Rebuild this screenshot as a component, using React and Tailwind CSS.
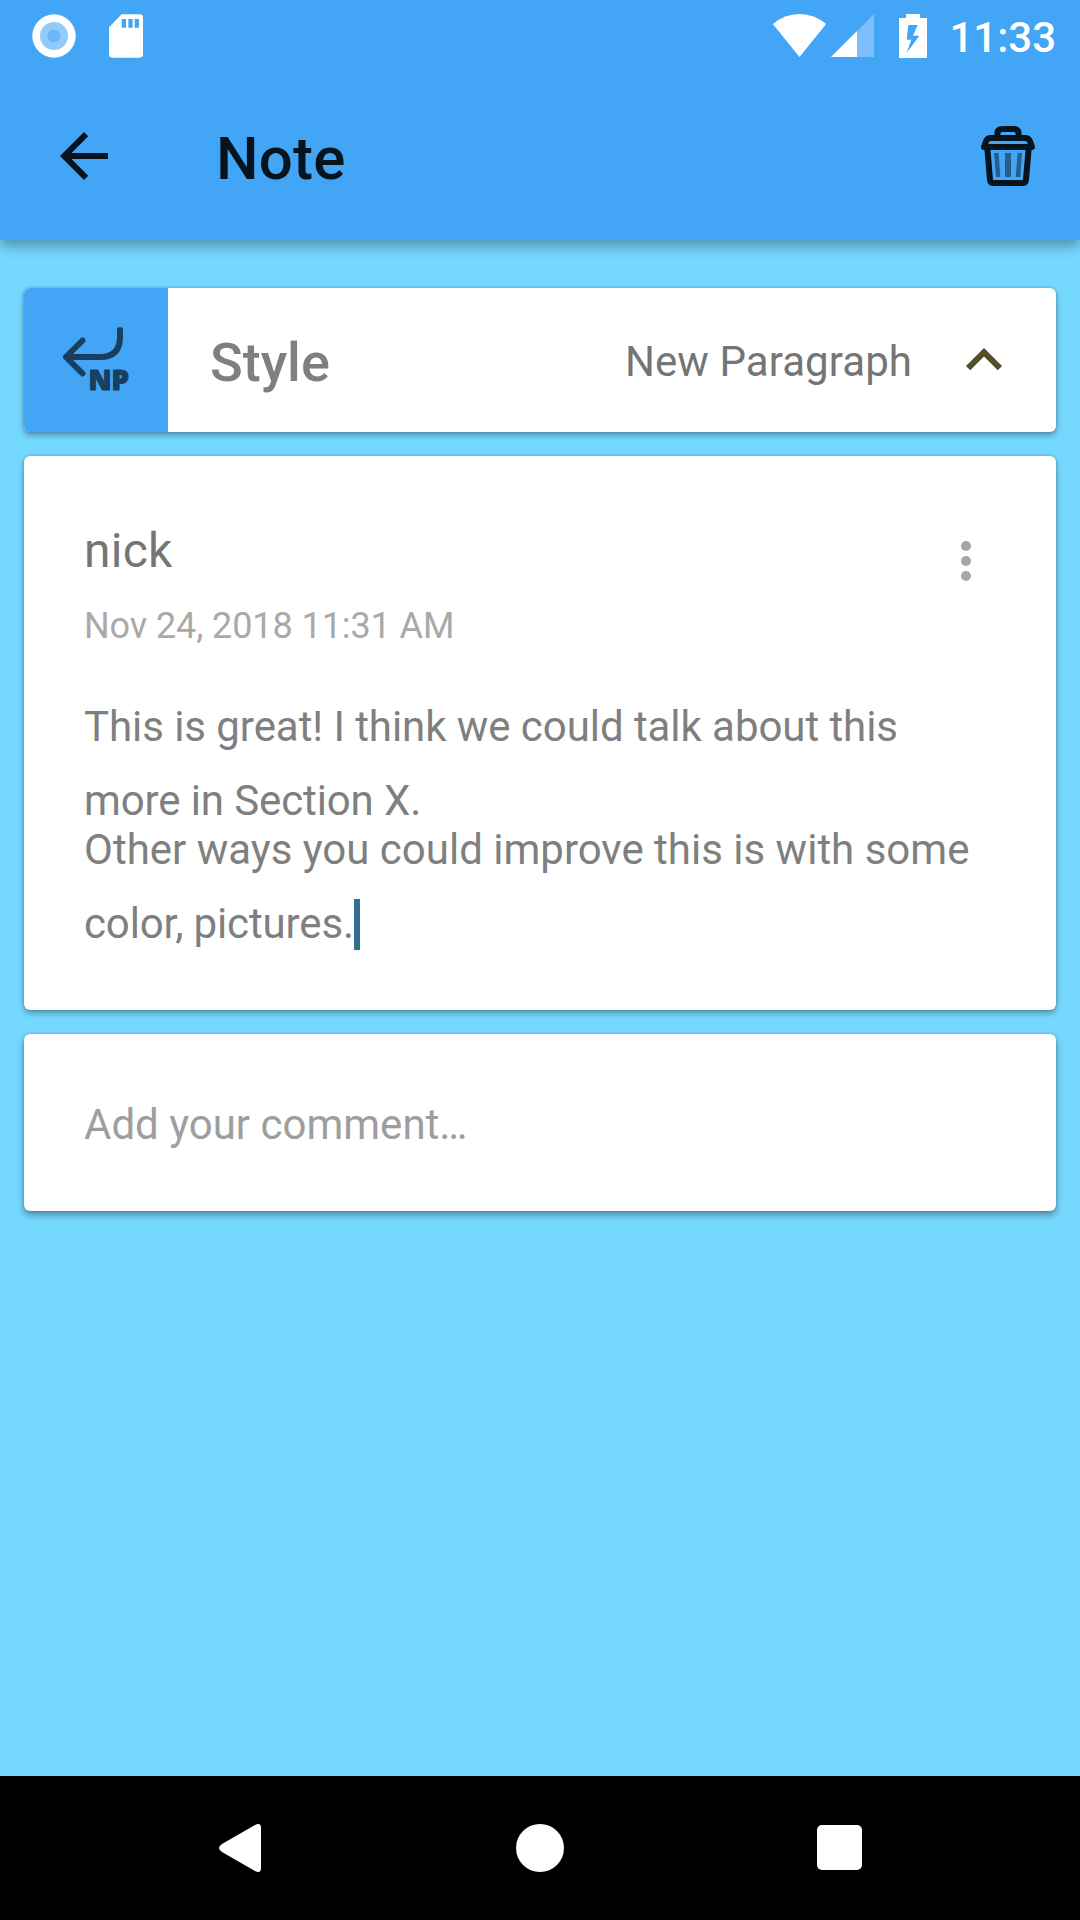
function StatusBar() {
  return (
    <div className="flex h-[72px] shrink-0 items-start justify-between pt-3 pr-6 pl-8 text-white">
      <div className="flex gap-8">
        <svg className="h-12 w-11" viewBox="0 0 44 48">
          <circle cx="22" cy="24" r="21.7" fill="#fff" />
          <circle cx="22" cy="24" r="14" fill="#92cbf9" />
          <circle cx="22" cy="24" r="6.6" fill="#6cb8f7" />
        </svg>
        <svg className="h-12 w-9" viewBox="324 36 108 144">
          <path
            d="M365 43H419Q429 43 429 53V163Q429 173 419 173H337Q327 173 327 163V82ZM365 57V83H378V57ZM385 57V83H398V57ZM404 57V83H417V57Z"
            fill="#fff"
            fillRule="evenodd"
          />
        </svg>
      </div>
      <div className="flex">
        <svg className="h-12 w-[55px]" viewBox="96 36 165 144">
          <path d="M98.500 72Q134 42 178.500 42T258.500 72L178.500 171Z" fill="#fff" />
        </svg>
        <svg className="ml-1 h-12 w-[44px]" viewBox="273 36 132 144">
          <path d="M351 94L402 42V171H351Z" fill="#7cbffb" />
          <path d="M273 171L351 93V171Z" fill="#fff" />
        </svg>
        <svg className="ml-[23px] h-12 w-[30px]" viewBox="474 36 90 144">
          <path
            d="M498 42H540V54H561V174H477V54H498ZM505 75L500 119H514L500 159L538 107H519L533 75Z"
            fill="#fff"
            fillRule="evenodd"
          />
        </svg>
        <span className="ml-[21px] pt-[5px] text-[42px] leading-[42px] font-medium">11:33</span>
      </div>
    </div>
  );
}

function TrashIcon() {
  return (
    <svg className="h-16 w-14" viewBox="720 372 168 192" fill="none">
      <path d="M762 459H776L781 531H768ZM795 459H813V531H795ZM833 459H846L841 531H827Z" fill="#265f8b" />
      <g stroke="#07141e" strokeWidth="18" strokeLinejoin="round">
        <path d="M772 408V402Q772 387 787 387H821Q836 387 836 402V408" />
        <path d="M732 441L738 424Q742 414 753 414H855Q866 414 870 424L876 441Z" />
        <path d="M742 445L750 539Q751 549 761 549H847Q857 549 858 539L866 445" />
      </g>
    </svg>
  );
}

function AppBar() {
  return (
    <div className="flex flex-1 items-center pr-11 pl-12">
      <svg className="h-18 w-18" viewBox="0 0 24 24" fill="#07141e">
        <path d="M20 11H7.830l5.590-5.590L12 4l-8 8 8 8 1.410-1.410L7.830 13H20v-2z" />
      </svg>
      <h1 className="ml-24 flex-1 pt-[5px] text-[60px] leading-[60px] font-medium tracking-[0.2px] text-[#07141e]">Note</h1>
      <TrashIcon />
    </div>
  );
}

function StyleCard() {
  return (
    <section className="flex h-36 rounded-[6px] bg-white shadow-[0_3px_6px_rgba(0,0,0,0.33),0_0_3px_rgba(0,0,0,0.18)]">
      <div className="flex w-36 items-center justify-center rounded-l-[6px] bg-[#42a5f5]">
        <svg className="h-18 w-18 overflow-visible" viewBox="60 324 72 72" fill="none">
          <path
            d="M120 330V337Q120 357 100 357H66M82.500 340.500L66 357L82.500 373.500"
            stroke="#183f5f"
            strokeWidth="6"
            strokeLinecap="round"
            strokeLinejoin="round"
          />
          <text x="88.500" y="389.500" fill="#183f5f" stroke="#183f5f" strokeWidth="1.200" fontSize="28.500" fontWeight="800" fontFamily="Open Sans, sans-serif" textLength="40.500" lengthAdjust="spacingAndGlyphs">
            NP
          </text>
        </svg>
      </div>
      <div className="flex flex-1 items-center pr-9 pl-[42px]">
        <h2 className="flex-1 pt-[5px] text-[54px] leading-[60px] font-medium text-[#7f7f7f]">Style</h2>
        <span className="pt-[3px] text-[42px] leading-[48px] tracking-[0.07px] text-[#757575]">New Paragraph</span>
        <svg className="ml-9 h-18 w-18" viewBox="0 0 24 24" fill="#554e2b">
          <path d="M12 8l-6 6 1.410 1.410L12 10.830l4.590 4.580L18 14z" />
        </svg>
      </div>
    </section>
  );
}

function NoteCard() {
  return (
    <section className="h-[554px] rounded-[6px] bg-white px-15 pt-[66px] shadow-[0_3px_6px_rgba(0,0,0,0.33),0_0_3px_rgba(0,0,0,0.18)]">
      <div className="flex h-[168px] items-start justify-between">
        <div className="pt-px">
          <div className="text-[48px] leading-[56px] tracking-[0.25px] text-[#757575]">nick</div>
          <div className="mt-[26px] text-[36px] leading-[42px] tracking-[-0.09px] text-[#a9a9a9]">Nov 24, 2018 11:31 AM</div>
        </div>
        <div className="mt-[19px] mr-[25px] flex flex-col gap-[5px]">
          <i className="size-[10px] rounded-full bg-[#a6a6a6]" />
          <i className="size-[10px] rounded-full bg-[#a6a6a6]" />
          <i className="size-[10px] rounded-full bg-[#a6a6a6]" />
        </div>
      </div>
      <div className="text-[42px] leading-[74px] whitespace-nowrap text-[#7f7f7f]">
        <p>
          <span className="tracking-[-0.06px]">This is great! I think we could talk about this</span>
          <br />
          <span className="tracking-[-0.12px]">more in Section X.</span>
        </p>
        <p className="-mt-[25px]">
          Other ways you could improve this is with some
          <br />
          <span className="tracking-[-0.13px]">color, pictures.</span>
          <span className="inline-block h-[51px] w-[6px] bg-[#31708e] align-[-12px]" />
        </p>
      </div>
    </section>
  );
}

function CommentCard() {
  return (
    <section className="flex h-[177px] items-center rounded-[6px] bg-white px-15 pt-1 shadow-[0_4px_7px_rgba(0,0,0,0.36),0_0_3px_rgba(0,0,0,0.18)]">
      <span className="text-[42px] leading-[50px] text-[#9e9e9e]">Add your comment…</span>
    </section>
  );
}

function NavigationBar() {
  return (
    <nav className="flex h-36 shrink-0 items-center justify-center gap-[228px] bg-black">
      <svg className="h-18 w-18" viewBox="204 1812 72 72">
        <path d="M222 1844L255 1825Q261 1822 261 1828V1868Q261 1874 255 1871L222 1852Q216 1848 222 1844Z" fill="#fff" />
      </svg>
      <div className="flex w-18 justify-center">
        <div className="size-12 rounded-full bg-white" />
      </div>
      <div className="flex w-18 pb-px pl-[13px]">
        <div className="size-[45px] rounded-[5px] bg-white" />
      </div>
    </nav>
  );
}

export default function App() {
  return (
    <div className="flex h-[1920px] w-[1080px] flex-col overflow-hidden bg-[#75d8ff] font-[Roboto,sans-serif]">
      <header className="flex h-60 shrink-0 flex-col bg-[#42a5f5] shadow-[0_6px_12px_rgba(0,0,0,0.32)]">
        <StatusBar />
        <AppBar />
      </header>
      <main className="flex flex-1 flex-col gap-6 px-6 pt-12">
        <StyleCard />
        <NoteCard />
        <CommentCard />
      </main>
      <NavigationBar />
    </div>
  );
}
